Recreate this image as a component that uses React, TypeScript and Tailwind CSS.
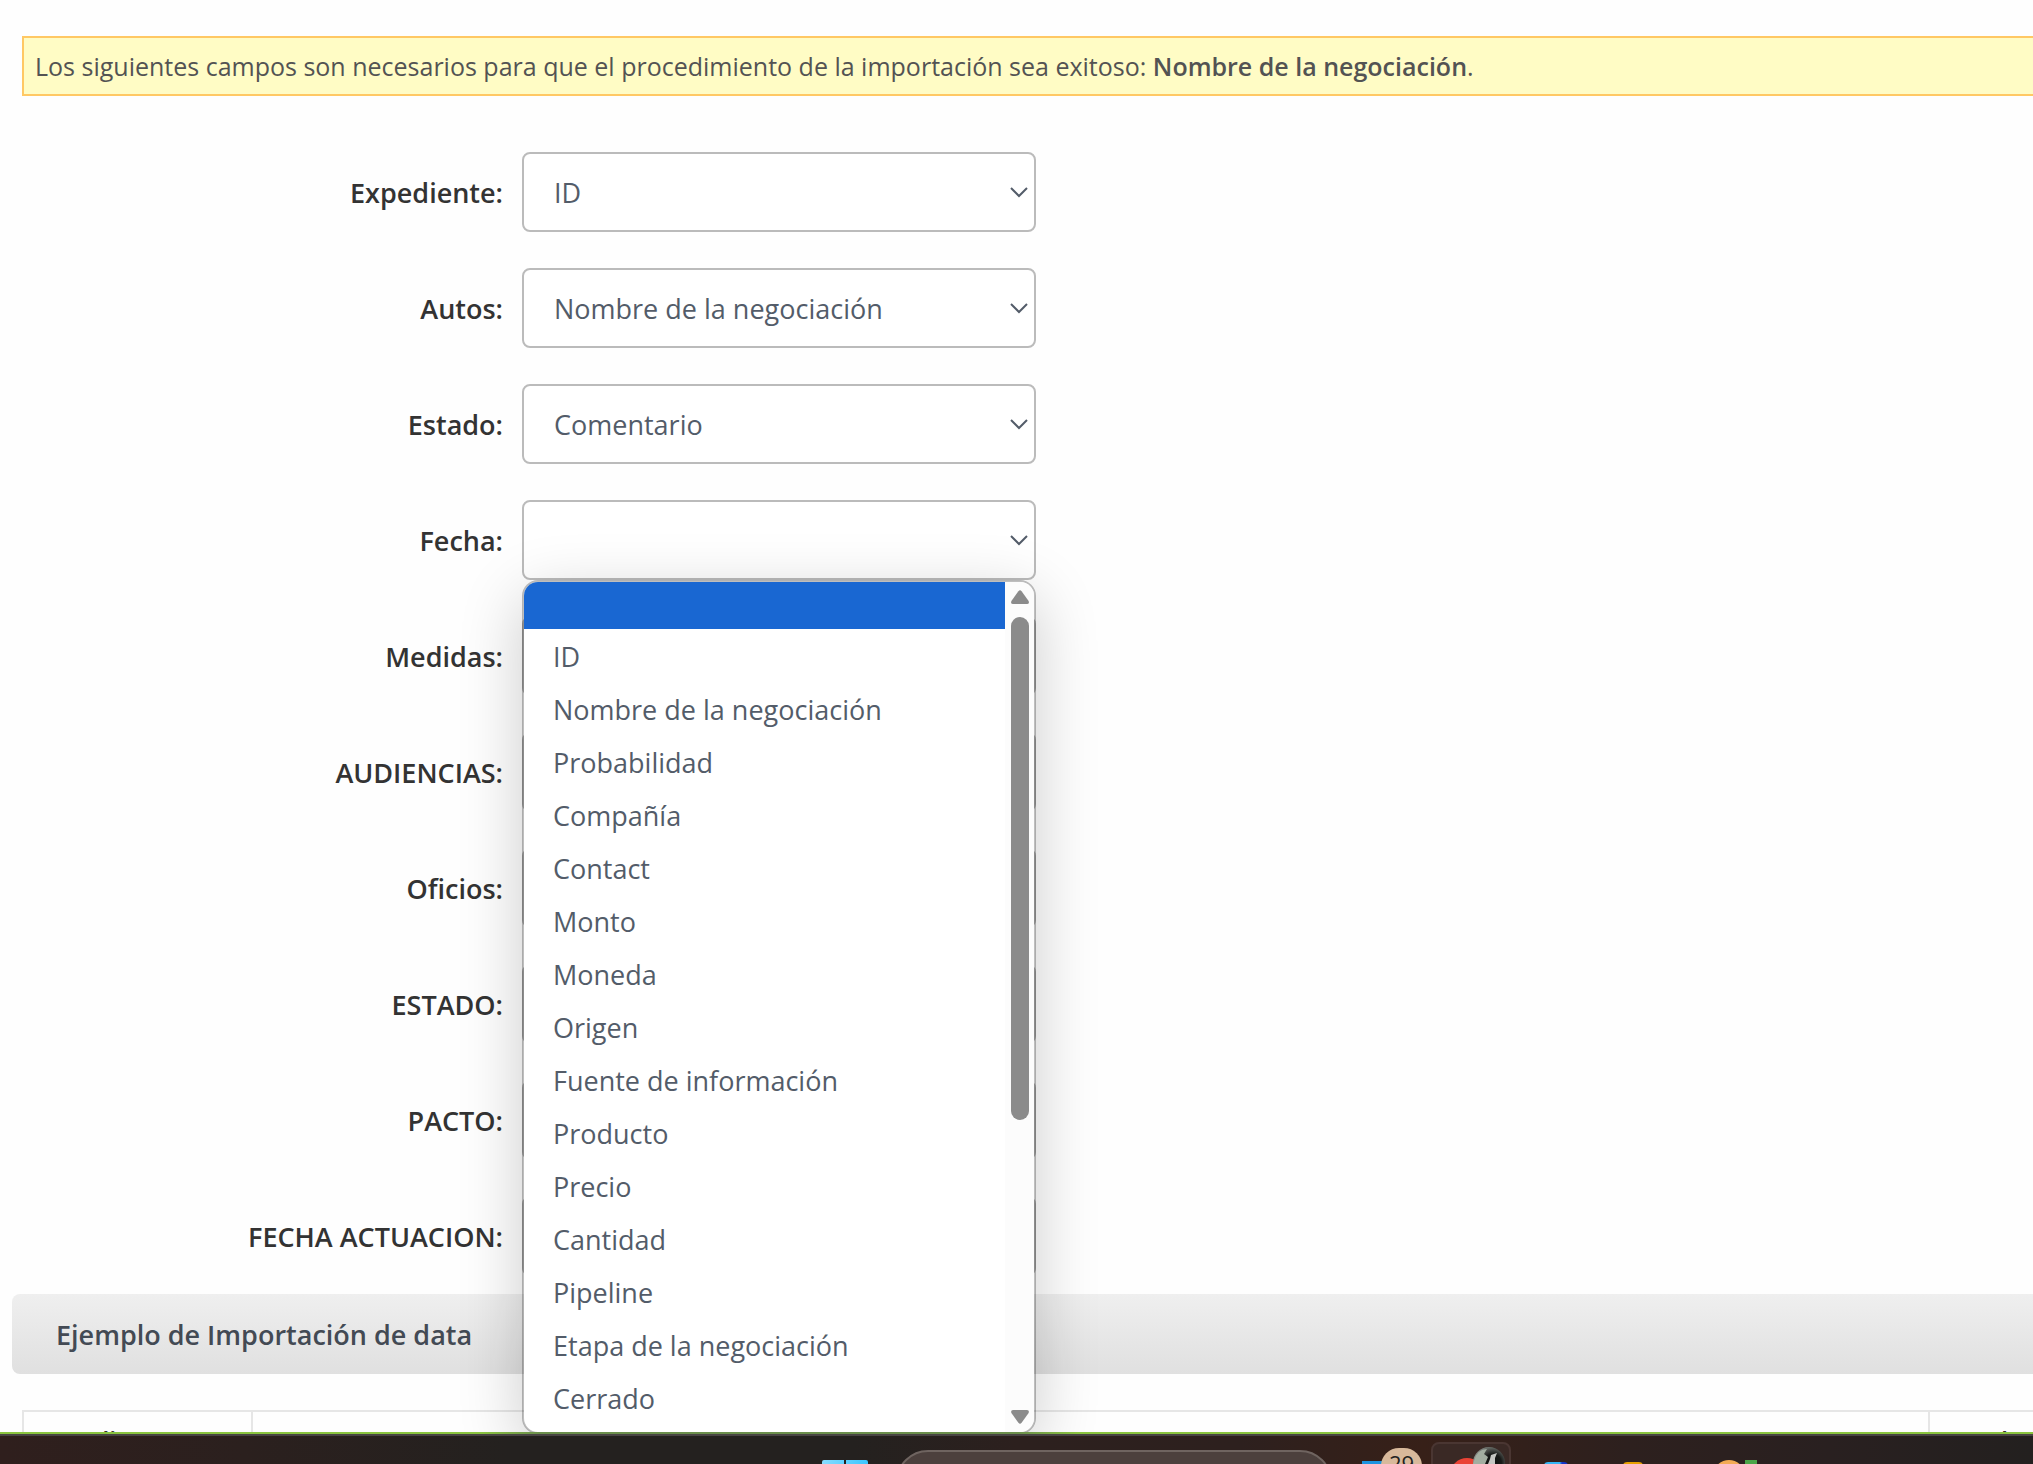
import React from "react";

const campos = [
  "ID",
  "Nombre de la negociación",
  "Probabilidad",
  "Compañía",
  "Contact",
  "Monto",
  "Moneda",
  "Origen",
  "Fuente de información",
  "Producto",
  "Precio",
  "Cantidad",
  "Pipeline",
  "Etapa de la negociación",
  "Cerrado",
  "Comentario",
];

const filas = [
  { id: "expediente", label: "Expediente:", value: "ID" },
  { id: "autos", label: "Autos:", value: "Nombre de la negociación" },
  { id: "estado", label: "Estado:", value: "Comentario" },
  { id: "fecha", label: "Fecha:", value: "", open: true },
  { id: "medidas", label: "Medidas:", value: "" },
  { id: "audiencias", label: "AUDIENCIAS:", value: "" },
  { id: "oficios", label: "Oficios:", value: "" },
  { id: "estado2", label: "ESTADO:", value: "" },
  { id: "pacto", label: "PACTO:", value: "" },
  { id: "fecha-actuacion", label: "FECHA ACTUACION:", value: "" },
];

function Menu() {
  return (
    <div className="absolute top-full left-0 z-10 flex w-full overflow-hidden rounded-2xl border-2 border-black/25 bg-white bg-clip-padding shadow-[0_16px_64px_rgba(0,0,0,0.2)]">
      <ul role="listbox" aria-label="Campos" className="min-w-0 flex-1 pb-[7px]">
        <li role="option" aria-selected="true" className="mb-px h-[47px] bg-[#1967d2]" />
        {campos.slice(0, 15).map((c) => (
          <li
            key={c}
            role="option"
            aria-selected="false"
            className="h-[53px] pl-[29px] text-[27px] leading-[53px] whitespace-nowrap text-[#535c69]"
          >
            {c}
          </li>
        ))}
      </ul>
      <div className="flex w-[29px] flex-col items-end bg-[#fcfcfc] pt-2 pr-[5px] pb-2">
        <svg width="18" height="14" viewBox="0 0 18 14" fill="#8b8b8b">
          <path d="M7.4 1.2Q9-.8 10.6 1.2L17.6 11Q18.6 14 16 14H2Q-.6 14 .4 11Z" />
        </svg>
        <div className="mt-[13px] h-[503px] w-[18px] rounded-full bg-[#8b8b8b]" />
        <svg className="mt-auto" width="18" height="14" viewBox="0 0 18 14" fill="#8b8b8b">
          <path d="M7.4 12.8Q9 14.8 10.6 12.8L17.6 3Q18.6 0 16 0H2Q-.6 0 .4 3Z" />
        </svg>
      </div>
    </div>
  );
}

function Campo({ id, label, value, open }: { id: string; label: string; value: string; open?: boolean }) {
  return (
    <div className="flex items-center gap-[19px]">
      <label htmlFor={id} className="w-[503px] shrink-0 pt-0.5 text-right text-[27px] font-semibold text-[#333]">
        {label}
      </label>
      <div className="relative w-[514px]">
        <select
          id={id}
          defaultValue={value}
          className="block h-20 w-full appearance-none rounded-lg border-2 border-[#bbb] bg-white pt-0.5 pr-10 pl-[30px] text-[27px] text-[#535c69]"
        >
          <option value=""></option>
          {campos.map((c) => (
            <option key={c}>{c}</option>
          ))}
        </select>
        <svg
          className="pointer-events-none absolute top-[34px] right-2"
          width="18"
          height="12"
          viewBox="0 0 18 12"
          fill="none"
          stroke="#535c69"
          strokeWidth="2"
        >
          <path d="M1 2 9 10 17 2" />
        </svg>
        {open && <Menu />}
      </div>
    </div>
  );
}

function Taskbar() {
  return (
    <footer className="shrink-0">
      <div className="h-0.5 bg-[linear-gradient(90deg,#8ac43f_480px,#6b8f4c_540px,#6b8f4c_1018px,#8ac43f_1078px)]" />
      <div className="h-0.5 bg-[#484443]" />
      <div className="flex h-7 items-start overflow-hidden bg-[linear-gradient(90deg,#2f1f1d_0%,#2b201e_12%,#24211f_25%,#24211f_42%,#2c201e_50%,#2d201e_61%,#372018_70%,#2d201e_80%,#292020_90%,#23201f_100%)] pl-[822px]">
        <svg className="shrink-0" width="46" height="28">
          <defs>
            <linearGradient id="win" x1="0" x2="1">
              <stop offset="0" stopColor="#86dcff" />
              <stop offset="1" stopColor="#3ac6ff" />
            </linearGradient>
          </defs>
          <path d="M2 24H22V28H0V26Q0 24 2 24ZM24 24H44Q46 24 46 26V28H24Z" fill="url(#win)" />
        </svg>
        <div className="mt-3.5 ml-7 h-16 w-[436px] shrink-0 rounded-full border-2 border-[#6f6460] bg-[#4c403d]" />
        <div className="relative mt-[25px] ml-[30px] h-8 w-10 shrink-0 bg-[#1c93df]">
          <span className="absolute bottom-[5px] left-[19px] h-10 w-[41px] rounded-[18px] bg-[#d8b99b] text-center text-[22px] leading-[30px] text-[#222]">
            29
          </span>
        </div>
        <div className="mt-1.5 ml-[29px] h-20 w-20 shrink-0 rounded-lg border-2 border-[#4a3632] bg-[#3a2925]">
          <svg className="ml-[17px]" width="59" height="20" viewBox="0 8 59 20">
            <defs>
              <radialGradient id="av" cx="0.62" cy="0.5" r="0.6">
                <stop offset="0" stopColor="#0d0f0d" />
                <stop offset="0.45" stopColor="#171917" />
                <stop offset="1" stopColor="#8a908a" />
              </radialGradient>
            </defs>
            <circle cx="17" cy="39" r="17" fill="#ea4335" />
            <circle cx="39" cy="27" r="16" fill="url(#av)" />
            <path d="M24 25Q27 13 37 13L34 18 38 21 35 28H23Z" fill="#a3aea1" />
            <path d="M41 19 47 17 45 22V28H38L40 23Z" fill="#c5c6c2" />
          </svg>
        </div>
        <div className="mt-[26px] ml-[33px] h-8 w-6 shrink-0 rounded-t bg-[linear-gradient(90deg,#35b6f5_65%,#1433c8_75%)]" />
        <div className="mt-[26px] ml-[55px] h-8 w-5 shrink-0 rounded-t bg-[#e7a000]" />
        <div className="mt-6 ml-[70px] h-8 w-8 shrink-0 rounded-full bg-[#f3ab55]" />
        <div className="mt-6 h-8 w-3 shrink-0 bg-[#4aa548]" />
      </div>
    </footer>
  );
}

export default function App() {
  return (
    <div className="flex h-screen flex-col overflow-hidden bg-[#fefefe] font-['Open_Sans','Noto_Sans',sans-serif]">
      <main className="flex-1 overflow-hidden pt-9">
        <p className="-mr-2 ml-[22px] h-[60px] border-2 border-[#ffc864] bg-[#fffcc5] pl-[11px] text-[25px] leading-[56px] whitespace-nowrap text-[#535353]">
          Los siguientes campos son necesarios para que el procedimiento de la importación sea exitoso:{" "}
          <b className="font-semibold">Nombre de la negociación</b>.
        </p>
        <form className="mt-14 flex flex-col gap-9">
          {filas.map((f) => (
            <Campo key={f.id} {...f} />
          ))}
        </form>
        <h2 className="mt-[18px] -mr-2 ml-3 h-20 rounded-lg bg-linear-to-b from-[#efefef] to-[#e0e0e0] pl-11 text-[27px] leading-[82px] font-semibold text-[#434a54]">
          Ejemplo de Importación de data
        </h2>
        <table className="mt-9 ml-[22px] w-full table-fixed border-collapse">
          <thead>
            <tr className="text-left text-[25px] leading-[56px] text-[#333]">
              <th className="w-[229px] border-2 border-[#e6e6e6] pl-3 font-semibold">Expediente</th>
              <th className="border-2 border-[#e6e6e6] pl-3 font-semibold">Autos</th>
              <th className="w-[125px] border-2 border-[#e6e6e6] pl-3 font-semibold">Estado</th>
            </tr>
          </thead>
        </table>
      </main>
      <Taskbar />
    </div>
  );
}
